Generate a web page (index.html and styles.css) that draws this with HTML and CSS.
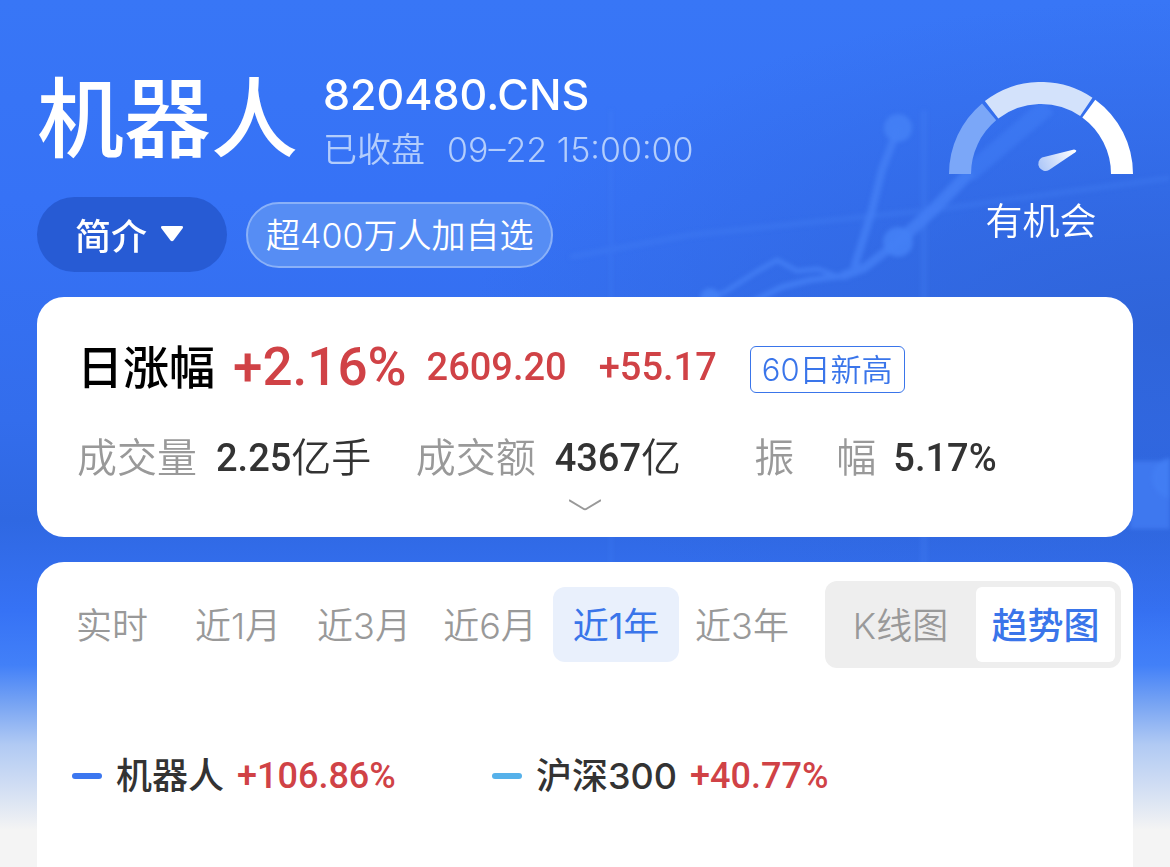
FILE: index.html
```html
<!DOCTYPE html>
<html lang="zh-CN">
<head>
  <meta charset="UTF-8">
  <meta name="viewport" content="width=device-width, initial-scale=1.0">
  <title>机器人 820480.CNS</title>
  <link rel="stylesheet" href="styles.css">
</head>
<body>
  <svg class="bg-art" viewBox="0 0 600 600" fill="none" aria-hidden="true">
    <g class="bg-grid">
      <path d="M41 110V600" stroke-width="3"/>
      <path d="M354 110V600" stroke-width="7"/>
      <path d="M0 257L120 235L370 209L600 178" stroke-width="6"/>
    </g>
    <g class="bg-line">
      <path d="M130 302L155 292L186 272L207 260L227 271L248 269L272 278" stroke-width="5"/>
      <path d="M178 304L212 287L240 280L272 276L294 267" stroke-width="6"/>
      <path d="M284 268L301 214L312 170L328 128" stroke-width="8"/>
      <path d="M272 276L294 268L328 242L350 220" stroke-width="9"/>
      <path d="M328 242L364 209L400 172" stroke-width="12"/>
      <path d="M398 174L450 130L478 106" stroke-width="18" opacity="0.6"/>
    </g>
    <g class="bg-dot">
      <circle cx="328" cy="128" r="14"/>
      <circle cx="328" cy="242" r="15"/>
      <circle cx="140" cy="298" r="10"/>
      <circle cx="602" cy="478" r="20"/>
      <rect x="560" y="461" width="50" height="68" opacity="0.8"/>
    </g>
  </svg>

  <div class="page">
    <header class="header">
      <div>
        <div class="title-row">
          <h1>机器人</h1>
          <div>
            <div class="code">820480.CNS</div>
            <div class="status"><span>已收盘</span><span>09–22 15:00:00</span></div>
          </div>
        </div>
        <div class="actions">
          <button class="btn-intro" type="button">简介
            <svg width="24" height="16" viewBox="0 0 24 16"><path d="M2.5 0H21.500Q24 0 22.500 2.500L13.500 14.500Q12 16 10.500 14.500L1.500 2.500Q0 0 2.500 0Z" fill="#fff"/></svg>
          </button>
          <span class="follow">超400万人加自选</span>
        </div>
      </div>
      <div class="gauge">
        <svg width="184" height="92" viewBox="0 0 184 92" fill="none">
          <defs>
            <linearGradient id="needle" x1="88" y1="86" x2="126" y2="68" gradientUnits="userSpaceOnUse">
              <stop offset="0" stop-color="#a9c4f8"/>
              <stop offset="1" stop-color="#fff"/>
            </linearGradient>
          </defs>
          <g stroke-width="22">
            <path d="M11 92A81 81 0 0 1 40.100 29.900" stroke="#7ba7f8"/>
            <path d="M42.600 27.800A81 81 0 0 1 137.300 24.800" stroke="#d3e2fb"/>
            <path d="M139.800 26.600A81 81 0 0 1 173 92" stroke="#fff"/>
          </g>
          <path d="M93 75.500L125 67.500Q129 68 126 70.500L100 88A7 7 0 1 1 93 75.500Z" fill="url(#needle)"/>
        </svg>
        <span>有机会</span>
      </div>
    </header>

    <section class="card quote">
      <div class="quote-main">
        <h2>日涨幅</h2>
        <span class="num rate">+2.16%</span>
        <span class="num price">2609.20</span>
        <span class="num change">+55.17</span>
        <span class="badge">60日新高</span>
      </div>
      <dl class="stats">
        <div><dt>成交量</dt><dd><span class="num">2.25</span>亿手</dd></div>
        <div><dt>成交额</dt><dd><span class="num">4367</span>亿</dd></div>
        <div><dt><span>振</span><span>幅</span></dt><dd><span class="num">5.17%</span></dd></div>
      </dl>
      <button class="expand" type="button" aria-label="展开">
        <svg width="32" height="12" viewBox="0 0 32 12" fill="none"><path d="M0 1L14 9.500Q16 11 18 9.500L32 1" stroke="#999" stroke-width="2"/></svg>
      </button>
    </section>

    <section class="card chart">
      <div class="toolbar">
        <div class="tabs">
          <button type="button">实时</button>
          <button type="button">近1月</button>
          <button type="button">近3月</button>
          <button type="button">近6月</button>
          <button type="button" class="active">近1年</button>
          <button type="button">近3年</button>
        </div>
        <div class="switch">
          <button type="button">K线图</button>
          <button type="button" class="active">趋势图</button>
        </div>
      </div>
      <ul class="legend">
        <li><i class="dash"></i>机器人<span class="num">+106.86%</span></li>
        <li><i class="dash light"></i>沪深300<span class="num">+40.77%</span></li>
      </ul>
    </section>
  </div>
</body>
</html>
```

FILE: styles.css
```css
* { box-sizing: border-box; }
body {
  margin: 0;
  font-family: Inter, "Noto Sans CJK SC", sans-serif;
  font-weight: 350;
  color: #333;
  position: relative;
  overflow-x: hidden;
  background:
    linear-gradient(180deg, rgba(63,126,248,0) 610px, #4280f8 665px, #79a5f3 705px, #b1caf3 745px, #dbe4f3 800px, #f4f4f4 830px),
    radial-gradient(ellipse 700px 330px at 1170px 330px, #2f64d9 0, rgba(47,100,217,0) 100%),
    linear-gradient(180deg, #3876f6 0, #3672f6 200px, #336dec 420px, #2f68e2 520px, #3672f5 610px);
}
button { font: inherit; border: none; background: none; padding: 0; cursor: pointer; }
h1, h2, dl, dd, ul { margin: 0; padding: 0; }
.num { font-family: Roboto, sans-serif; font-weight: 500; }

.bg-art { position: absolute; top: 0; right: 0; width: 600px; height: 600px; filter: blur(2px); }
.bg-grid { stroke: #4580f5; opacity: 0.3; }
.bg-line { stroke: #4580f6; opacity: 0.8; stroke-linejoin: round; }
.bg-dot { fill: #4580f5; opacity: 0.9; }

.page { position: relative; min-height: 100vh; padding: 70px 37px 0; display: flex; flex-direction: column; gap: 25px; }

.header { display: flex; justify-content: space-between; color: #fff; }
.title-row { display: flex; gap: 25px; height: 104px; }
.title-row h1 { font-size: 87px; line-height: 100px; font-weight: 500; }
.code { font-size: 43px; line-height: 48px; font-weight: 450; }
.status { display: flex; gap: 22px; margin-top: 8px; font-size: 34px; line-height: 48px; color: #b3cdfc; }

.actions { display: flex; align-items: center; gap: 19px; margin-top: 23px; }
.btn-intro { display: flex; align-items: center; gap: 13px; width: 190px; height: 75px; padding: 0 0 2px 38px; border-radius: 38px; background: #275bd4; color: #fff; font-size: 36px; font-weight: 500; }
.follow { height: 66px; padding: 0 18px; border: 2px solid #8ab1f8; border-radius: 33px; background: #568df4; font-size: 34px; line-height: 64px; }

.gauge { display: flex; flex-direction: column; align-items: center; padding-top: 12px; }
.gauge span { margin-top: 22px; font-size: 37px; line-height: 52px; }

.card { background: #fff; border-radius: 27px; }
.quote { height: 240px; padding: 40px 40px 0; }
.quote-main { display: flex; align-items: center; height: 60px; color: #d04246; }
.quote-main h2 { font-size: 46px; line-height: 60px; font-weight: 500; color: #000; }
.rate { margin-left: 18px; font-size: 53px; }
.price { margin-left: 20px; font-size: 38px; }
.change { margin-left: 32px; font-size: 38px; }
.badge { margin: 4px 0 0 33px; height: 47px; padding: 0 11px; border: 1px solid #3a75ea; border-radius: 6px; font-size: 31px; line-height: 45px; color: #3a75ea; }

.stats { display: grid; grid-template-columns: repeat(3, 1fr); margin-top: 31px; font-size: 40px; line-height: 60px; }
.stats div { display: flex; gap: 17px; }
.stats dt { display: flex; justify-content: space-between; width: 122px; color: #999; }
.stats dd { display: flex; }
.stats .num { font-size: 38px; }
.expand { display: block; margin: 9px auto 0; height: 16px; line-height: 0; }

.chart { flex: 1; padding: 19px 12px 24px; border-radius: 27px 27px 0 0; }
.toolbar { display: flex; align-items: center; gap: 20px; }
.toolbar button { height: 75px; padding-bottom: 3px; font-size: 36px; color: #999; }
.tabs { display: flex; flex: 1; }
.tabs button { flex: 1; border-radius: 12px; }
.tabs .active { background: #e9f0fc; color: #3a75ea; font-weight: 400; }
.switch { display: flex; gap: 6px; width: 296px; padding: 6px; border-radius: 12px; background: #eee; }
.switch button { flex: 1; border-radius: 6px; }
.switch .active { background: #fff; color: #3a75ea; font-weight: 500; }

.legend { display: flex; margin-top: 82px; padding-left: 23px; list-style: none; font-size: 36px; line-height: 52px; font-weight: 450; }
.legend li { display: flex; align-items: center; width: 420px; }
.legend .num { margin-left: 13px; font-size: 36px; color: #d04246; }
.dash { width: 30px; height: 6px; margin-right: 14px; border-radius: 3px; background: #3c77f0; }
.dash.light { background: #56b1ea; }
```
